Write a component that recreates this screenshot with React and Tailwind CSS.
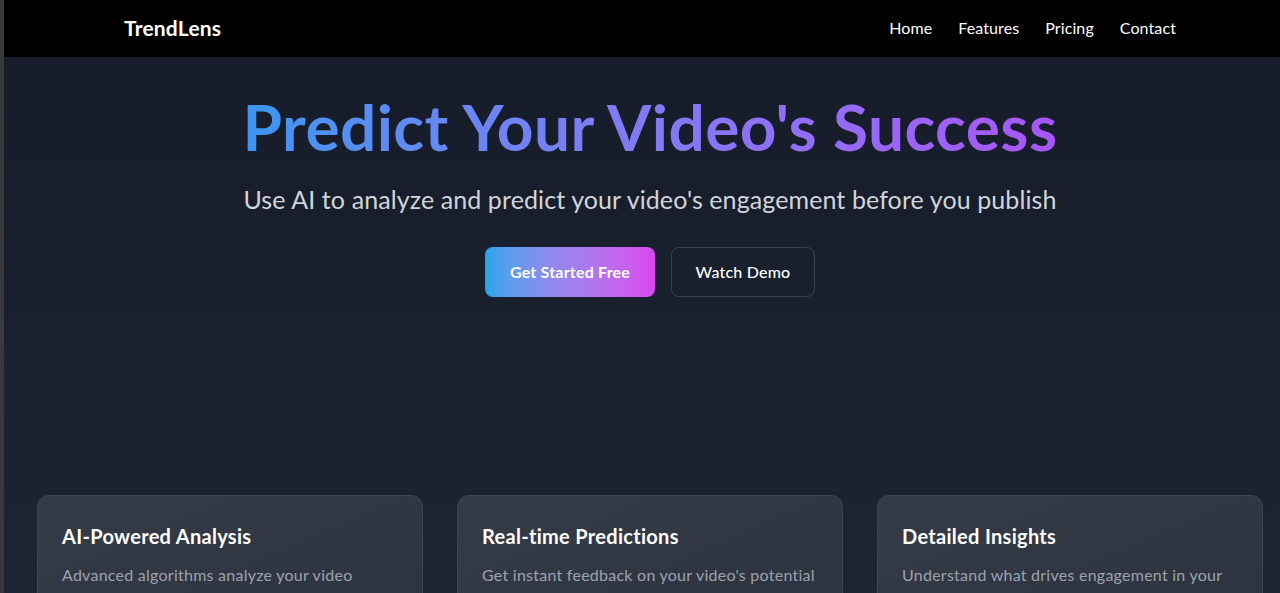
const features = [
  { title: 'AI-Powered Analysis', desc: 'Advanced algorithms analyze your video content, thumbnails and titles to predict performance.' },
  { title: 'Real-time Predictions', desc: "Get instant feedback on your video's potential reach and engagement before publishing." },
  { title: 'Detailed Insights', desc: 'Understand what drives engagement in your niche with actionable recommendations.' },
];

export default function App() {
  return (
    <div className="flex w-full min-h-screen overflow-hidden bg-[#3a3a3c]" style={{ fontFamily: 'Lato, "Open Sans", sans-serif' }}>
      <div className="w-[4px] shrink-0 bg-[#38393b]" />
      <div className="w-[1292px] shrink-0 bg-gradient-to-b from-[#151b29] to-[#1f2635] min-h-screen">
        <header className="h-[57px] bg-black flex items-center justify-between px-[120px] pb-[2px]">
          <span className="text-white text-[21px] font-bold tracking-[0.2px]">TrendLens</span>
          <nav className="flex gap-[26px] text-white text-[16px] tracking-[0.1px]">
            <a href="#">Home</a>
            <a href="#">Features</a>
            <a href="#">Pricing</a>
            <a href="#">Contact</a>
          </nav>
        </header>

        <section className="flex flex-col items-center pt-[38px] pb-[198px]">
          <h1 className="text-[64px] leading-[64px] font-bold tracking-[0.4px] bg-gradient-to-r from-[#3b95f0] to-[#a855f7] bg-clip-text text-transparent">
            Predict Your Video's Success
          </h1>
          <p className="mt-6 text-[25px] leading-8 text-[#d1d5db] tracking-[0.1px]">
            Use AI to analyze and predict your video's engagement before you publish
          </p>
          <div className="mt-8 flex gap-4">
            <button className="h-[50px] w-[170px] rounded-lg bg-gradient-to-r from-[#1ea5ec] to-[#d946ef] text-white font-bold text-[16px] tracking-[0.2px]">
              Get Started Free
            </button>
            <button className="h-[50px] w-[144px] rounded-lg border border-[#3a404c] text-white font-medium text-[16px] tracking-[0.2px]">
              Watch Demo
            </button>
          </div>
        </section>

        <section className="grid grid-cols-3 gap-[34px] px-[33px] pb-16">
          {features.map(({ title, desc }) => (
            <div key={title} className="rounded-xl border border-[#3f4551] bg-gradient-to-br from-[#353b47] to-[#2b313d] p-6">
              <h3 className="text-white text-[20px] font-bold leading-7 mt-[2px] tracking-[0.3px]">{title}</h3>
              <p className="mt-[13px] text-[#9ca3af] text-[16px] leading-6 tracking-[0.25px]">{desc}</p>
            </div>
          ))}
        </section>
      </div>
    </div>
  );
}
